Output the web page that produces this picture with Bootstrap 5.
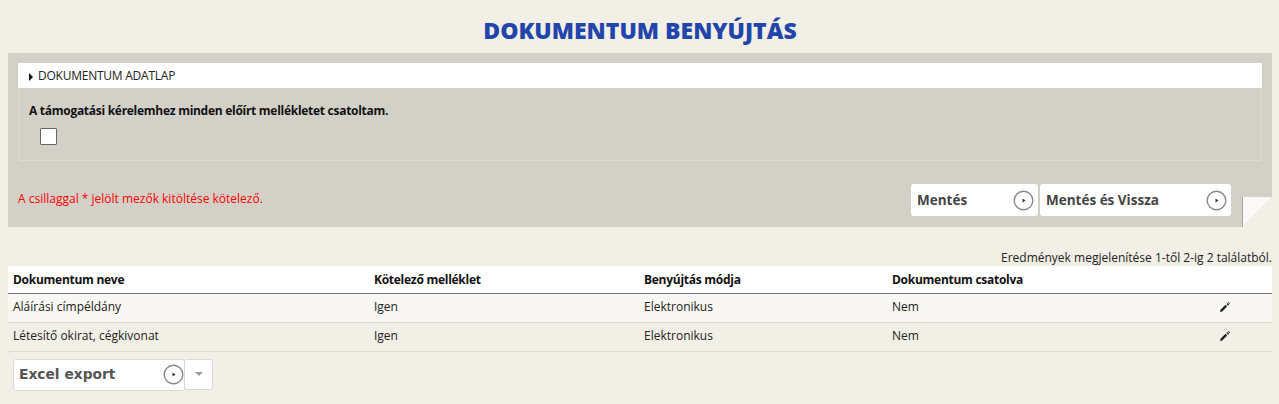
<!DOCTYPE html>
<html lang="hu">
<head>
    <meta charset="UTF-8">
    <title>Dokumentum benyújtás</title>
    <link href="https://cdn.jsdelivr.net/npm/bootstrap@5.3.0/dist/css/bootstrap.min.css" rel="stylesheet">
    <script src="https://cdn.jsdelivr.net/npm/bootstrap@5.3.0/dist/js/bootstrap.bundle.min.js"></script>
    <style>
        body { background: #f2efe7; color: #222; font-family: "Open Sans", sans-serif; font-size: 12px; }
        .page-wrap { padding: 0 7px 0 8px; }
        .page-title { font-family: "Open Sans", sans-serif; font-weight: 800; font-size: 23px; color: #2145ab; text-align: center; margin: 0; height: 53px; line-height: 61px; text-transform: uppercase; }
        .form-panel { background: #d3d0c8; height: 174px; padding: 10px 10px 0; position: relative; }
        .panel-head { background: #fff; height: 25px; line-height: 25px; padding-left: 11px; font-size: 12px; letter-spacing: -.02em; }
        .panel-body-box { border: 1px solid #dedbd3; border-top: 0; border-radius: 0 0 2px 2px; height: 73px; padding: 14px 10px; }
        .panel-body-box b { display: block; font-size: 12px; font-weight: 700; line-height: 17px; letter-spacing: -.28px; color: #111; }
        .fake-check { display: block; width: 17px; height: 17px; background: #fff; border: 1px solid #666; border-radius: 1px; margin: 9px 0 0 11px; }
        .req-note { color: #f00; font-size: 12px; margin: 0; padding-top: 6px; }
        .save-row { height: 66px; padding-top: 23px; }
        .save-group { margin-right: 31px; }
        .save-btn { background: #fff; height: 32px; font-weight: 700; font-size: 13.5px; color: #444; border: 0; border-radius: 3px; padding: 0 4px 0 6px; }
        .circle-ico { width: 21px; height: 21px; flex: none; }
        .fold { position: absolute; right: 0; bottom: 0; width: 30px; height: 30px; }
        .result-info { text-align: right; height: 17px; line-height: 17px; margin-top: 22px; }
        .doc-table { margin: 0; --bs-table-bg: transparent; font-size: 12px; color: #222; }
        .doc-table th { background: #fff; height: 27px; padding: 4px 5px 2px; border-bottom: 1px solid #777; font-weight: 700; vertical-align: middle; letter-spacing: -.27px; color: #111; }
        .doc-table td { height: 29px; padding: 2px 5px 4px; border-bottom: 1px solid #dcd9d1; vertical-align: middle; }
        .doc-table .row-light td { background: #f8f7f3; }
        .excel-wrap { margin: 7px 0 0 5px; }
        .excel-btn { background: #fff; height: 32px; width: 172px; border: 1px solid #dcd9d1; border-radius: 3px; font-family: "DejaVu Sans", sans-serif; font-weight: 700; font-size: 13.8px; color: #555; padding: 0 0 0 5px; }
        .excel-caret { background: #fff; height: 31px; width: 29px; margin-left: -1px; border: 1px solid #dcd9d1; border-radius: 3px; position: relative; }
        .caret-down { width: 0; height: 0; border: 4px solid transparent; border-top: 4px solid #999; border-bottom: 0; }
        .caret-right { display: inline-block; width: 0; height: 0; border: 4px solid transparent; border-left: 4px solid #111; border-right: 0; margin-right: 5px; vertical-align: -1px; }
    </style>
</head>
<body>
    <div class="page-wrap">
        <h1 class="page-title">Dokumentum benyújtás</h1>

        <div class="form-panel">
            <div class="panel-head"><span class="caret-right"></span>DOKUMENTUM ADATLAP</div>
            <div class="panel-body-box">
                <b>A támogatási kérelemhez minden előírt mellékletet csatoltam.</b>
                <span class="fake-check"></span>
            </div>
            <div class="save-row d-flex justify-content-between">
                <p class="req-note">A csillaggal * jelölt mezők kitöltése kötelező.</p>
                <div class="d-flex gap-0 save-group">
                    <button type="button" class="save-btn d-flex align-items-center justify-content-between" style="width:127px">Mentés
                        <svg class="circle-ico" viewBox="0 0 21 21"><circle cx="10.5" cy="10.5" r="9.3" fill="#fff" stroke="#888" stroke-width="1.4"/><path d="M9.5 8.5l3 2-3 2z" fill="#333"/></svg>
                    </button>
                    <button type="button" class="save-btn d-flex align-items-center justify-content-between" style="width:191px;margin-left:2px">Mentés és Vissza
                        <svg class="circle-ico" viewBox="0 0 21 21"><circle cx="10.5" cy="10.5" r="9.3" fill="#fff" stroke="#888" stroke-width="1.4"/><path d="M9.5 8.5l3 2-3 2z" fill="#333"/></svg>
                    </button>
                </div>
            </div>
            <svg class="fold" viewBox="0 0 30 30"><path d="M30 0V30H0z" fill="#f2efe7"/><path d="M0 0H30L0 30z" fill="#fbfaf8"/><path d="M.5 0V30" stroke="#a8a59d" stroke-width="1"/></svg>
        </div>

        <div class="result-info">Eredmények megjelenítése 1-től 2-ig 2 találatból.</div>
        <table class="table doc-table">
            <thead>
                <tr>
                    <th style="width:361px">Dokumentum neve</th>
                    <th style="width:270px">Kötelező melléklet</th>
                    <th style="width:248px">Benyújtás módja</th>
                    <th>Dokumentum csatolva</th>
                    <th style="width:58px"></th>
                </tr>
            </thead>
            <tbody>
                <tr class="row-light">
                    <td>Aláírási címpéldány</td><td>Igen</td><td>Elektronikus</td><td>Nem</td>
                    <td><svg width="12" height="12" viewBox="0 0 12 12"><path d="M1 11l.5-2.2 5-5 1.7 1.7-5 5z" fill="#222"/><path d="M7.4 3l1-1 1.7 1.7-1 1z" fill="#222"/><path d="M9 1.6l.8-.6 1.2 1.2-.7.8z" fill="#222"/></svg></td>
                </tr>
                <tr>
                    <td>Létesítő okirat, cégkivonat</td><td>Igen</td><td>Elektronikus</td><td>Nem</td>
                    <td><svg width="12" height="12" viewBox="0 0 12 12"><path d="M1 11l.5-2.2 5-5 1.7 1.7-5 5z" fill="#222"/><path d="M7.4 3l1-1 1.7 1.7-1 1z" fill="#222"/><path d="M9 1.6l.8-.6 1.2 1.2-.7.8z" fill="#222"/></svg></td>
                </tr>
            </tbody>
        </table>

        <div class="excel-wrap d-flex">
            <button type="button" class="excel-btn d-flex align-items-center justify-content-between">Excel export
                <svg class="circle-ico" viewBox="0 0 21 21"><circle cx="10.5" cy="10.5" r="9.3" fill="#fff" stroke="#888" stroke-width="1.4"/><path d="M9.5 8.5l3 2-3 2z" fill="#333"/></svg>
            </button>
            <button type="button" class="excel-caret d-flex align-items-center justify-content-center p-0" aria-label="Menu"><span class="caret-down"></span></button>
        </div>
    </div>
</body>
</html>
